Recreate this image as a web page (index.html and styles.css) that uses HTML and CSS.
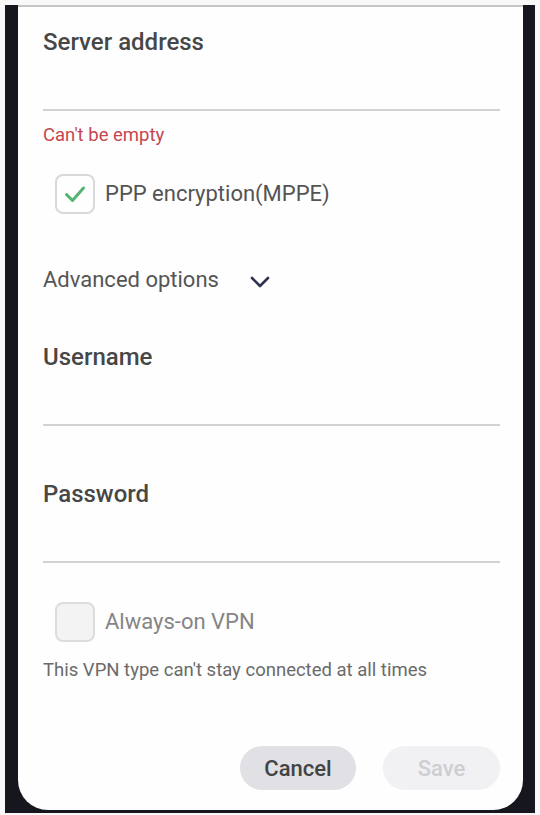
FILE: index.html
```html
<!DOCTYPE html>
<html lang="en">
<head>
<meta charset="utf-8">
<title>VPN</title>
<link rel="stylesheet" href="styles.css">
</head>
<body>
<div class="frame">
  <div class="card">
    <div class="group">
      <div class="title">Server address</div>
      <div class="field"></div>
    </div>
    <div class="error">Can't be empty</div>
    <div class="check-row first">
      <span class="box checked">
        <svg width="40" height="40" viewBox="0 0 40 40"><polyline points="11.5,20.5 17.5,26.5 28.5,14" fill="none" stroke="#52b56f" stroke-width="3" stroke-linecap="round" stroke-linejoin="round"/></svg>
      </span>
      <span class="check-label">PPP encryption(MPPE)</span>
    </div>
    <div class="advanced">
      <span class="adv-label">Advanced options</span>
      <svg class="chev" width="20" height="12" viewBox="0 0 20 12"><polyline points="2,2 10,10 18,2" fill="none" stroke="#2f3350" stroke-width="2.6" stroke-linecap="round" stroke-linejoin="round"/></svg>
    </div>
    <div class="group username">
      <div class="title">Username</div>
      <div class="field"></div>
    </div>
    <div class="group password">
      <div class="title">Password</div>
      <div class="field"></div>
    </div>
    <div class="check-row second">
      <span class="box empty"></span>
      <span class="check-label dim">Always-on VPN</span>
    </div>
    <div class="note">This VPN type can't stay connected at all times</div>
    <div class="buttons">
      <button class="btn cancel">Cancel</button>
      <button class="btn save">Save</button>
    </div>
  </div>
</div>
</body>
</html>
```
FILE: styles.css
```css
html, body {
  margin: 0;
  padding: 0;
  background: #f8f8f8;
  font-family: Roboto, "Liberation Sans", sans-serif;
}

.frame {
  margin: 5px 5px 0 5px;
  width: 530px;
  height: 808px;
  box-sizing: border-box;
  padding: 0 12px 3px 13px;
  background: #16161e;
}

.card {
  height: 100%;
  box-sizing: border-box;
  background: #fefefe;
  border-top: 2px solid #c6c6c6;
  border-radius: 0 0 30px 30px;
  padding: 21px 23px 20px 25px;
  display: flex;
  flex-direction: column;
}

.title {
  font-size: 24px;
  line-height: 28px;
  font-weight: 500;
  color: #474747;
}

.field {
  height: 53px;
  border-bottom: 2px solid #d2d2d2;
}

.username { margin-top: 50px; }
.password { margin-top: 54px; }

.error {
  margin-top: 13px;
  font-size: 18.5px;
  line-height: 22px;
  color: #c4464e;
}

.check-row {
  display: flex;
  align-items: center;
  padding-left: 12px;
  gap: 10px;
}
.check-row.first { margin-top: 28px; }
.check-row.second { margin-top: 39px; }

.box {
  width: 40px;
  height: 40px;
  box-sizing: border-box;
  border: 2px solid #d9d9d9;
  border-radius: 8px;
  display: flex;
  align-items: center;
  justify-content: center;
}
.box svg { display: block; margin: -2px; }
.box.empty { background: #f3f3f3; border-color: #dcdcdc; }

.check-label {
  font-size: 22px;
  line-height: 26px;
  color: #545454;
}
.check-label.dim { color: #858585; }

.advanced {
  margin-top: 53px;
  display: flex;
  align-items: center;
  gap: 31px;
}
.adv-label {
  font-size: 22px;
  line-height: 26px;
  color: #555;
}
.chev { display: block; margin-top: 4px; }

.note {
  margin-top: 17px;
  font-size: 18.5px;
  line-height: 22px;
  color: #6a6a6a;
}

.buttons {
  margin-top: auto;
  display: flex;
  justify-content: flex-end;
  gap: 27px;
}
.btn {
  width: 116px;
  height: 44px;
  border: none;
  border-radius: 22px;
  font-family: Roboto, "Liberation Sans", sans-serif;
  font-size: 22px;
  font-weight: 500;
  padding: 0;
}
.cancel { background: #e1e1e5; color: #434343; }
.save { width: 117px; background: #f1f1f3; color: #cdcdd2; }
```
